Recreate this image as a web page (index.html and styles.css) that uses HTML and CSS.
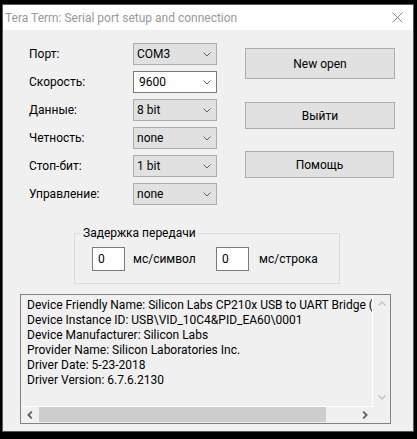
FILE: index.html
```html
<!DOCTYPE html>
<html lang="ru">
<head>
<meta charset="utf-8">
<title>Tera Term: Serial port setup and connection</title>
<link rel="stylesheet" href="styles.css">
</head>
<body>
<div class="window">
  <div class="titlebar">
    <span class="title">Tera Term: Serial port setup and connection</span>
    <svg class="close" width="11" height="11" viewBox="0 0 11 11"><path d="M0.5 0.5 L10.5 10.5 M10.5 0.5 L0.5 10.5" stroke="#8a8a8a" stroke-width="1" fill="none"/></svg>
  </div>
  <div class="content">
    <div class="top">
      <div class="form">
        <span class="label">Порт:</span>
        <div class="combo"><span class="combo-text">COM3</span><svg class="chev" width="8" height="5" viewBox="0 0 8 5"><polyline points="0.5,0.5 4,4 7.5,0.5" fill="none" stroke="#606060" stroke-width="1"/></svg></div>
        <span class="label">Скорость:</span>
        <div class="combo combo-edit"><span class="combo-text">9600</span><svg class="chev" width="8" height="5" viewBox="0 0 8 5"><polyline points="0.5,0.5 4,4 7.5,0.5" fill="none" stroke="#606060" stroke-width="1"/></svg></div>
        <span class="label">Данные:</span>
        <div class="combo"><span class="combo-text">8 bit</span><svg class="chev" width="8" height="5" viewBox="0 0 8 5"><polyline points="0.5,0.5 4,4 7.5,0.5" fill="none" stroke="#606060" stroke-width="1"/></svg></div>
        <span class="label">Четность:</span>
        <div class="combo"><span class="combo-text">none</span><svg class="chev" width="8" height="5" viewBox="0 0 8 5"><polyline points="0.5,0.5 4,4 7.5,0.5" fill="none" stroke="#606060" stroke-width="1"/></svg></div>
        <span class="label">Стоп-бит:</span>
        <div class="combo"><span class="combo-text">1 bit</span><svg class="chev" width="8" height="5" viewBox="0 0 8 5"><polyline points="0.5,0.5 4,4 7.5,0.5" fill="none" stroke="#606060" stroke-width="1"/></svg></div>
        <span class="label">Управление:</span>
        <div class="combo"><span class="combo-text">none</span><svg class="chev" width="8" height="5" viewBox="0 0 8 5"><polyline points="0.5,0.5 4,4 7.5,0.5" fill="none" stroke="#606060" stroke-width="1"/></svg></div>
      </div>
      <div class="buttons">
        <div class="btn btn-default">New open</div>
        <div class="btn btn-exit">Выйти</div>
        <div class="btn btn-help">Помощь</div>
      </div>
    </div>
    <fieldset class="group">
      <legend>Задержка передачи</legend>
      <div class="delay-row">
        <div class="num">0</div>
        <span class="unit unit-char">мс/символ</span>
        <div class="num">0</div>
        <span class="unit unit-line">мс/строка</span>
      </div>
    </fieldset>
    <div class="listbox">
      <div class="list-main">
        <div class="list-text">
          <div class="line">Device Friendly Name: Silicon Labs CP210x USB to UART Bridge (COM3)</div>
          <div class="line">Device Instance ID: USB\VID_10C4&amp;PID_EA60\0001</div>
          <div class="line">Device Manufacturer: Silicon Labs</div>
          <div class="line">Provider Name: Silicon Laboratories Inc.</div>
          <div class="line">Driver Date: 5-23-2018</div>
          <div class="line">Driver Version: 6.7.6.2130</div>
        </div>
        <div class="vscroll">
          <div class="sbtn"><svg width="8" height="5" viewBox="0 0 8 5"><polyline points="0.5,4.5 4,1 7.5,4.5" fill="none" stroke="#c2c2c2" stroke-width="1.3"/></svg></div>
          <div class="sbtn"><svg width="8" height="5" viewBox="0 0 8 5"><polyline points="0.5,0.5 4,4 7.5,0.5" fill="none" stroke="#c2c2c2" stroke-width="1.3"/></svg></div>
        </div>
      </div>
      <div class="hscroll-row">
        <div class="hscroll">
          <div class="hbtn"><svg width="6" height="8" viewBox="0 0 6 8"><polyline points="4.8,0.6 1.4,4 4.8,7.4" fill="none" stroke="#606060" stroke-width="1.8"/></svg></div>
          <div class="thumb-track"><div class="thumb"></div></div>
          <div class="hbtn"><svg width="6" height="8" viewBox="0 0 6 8"><polyline points="1.2,0.6 4.6,4 1.2,7.4" fill="none" stroke="#606060" stroke-width="1.8"/></svg></div>
        </div>
        <div class="corner"></div>
      </div>
    </div>
  </div>
</div>
</body>
</html>
```
FILE: styles.css
```css
* { box-sizing: border-box; }

html, body {
  margin: 0;
  padding: 0;
  width: 417px;
  height: 439px;
  overflow: hidden;
  background: #000;
}

body {
  font-family: Roboto, "Noto Sans", sans-serif;
  font-size: 12px;
  color: #000;
}

.window {
  margin: 4px 0 0 2px;
  width: 412px;
  height: 428px;
  border: 1px solid #5a5a5a;
  background: #f0f0f0;
  display: flex;
  flex-direction: column;
}

.titlebar {
  height: 25px;
  flex: none;
  background: #fff;
  display: flex;
  align-items: center;
  justify-content: space-between;
  padding: 0 10px 0 2px;
}

.title {
  color: #999;
  line-height: 16px;
}

.close { display: block; }

.content {
  display: flex;
  flex-direction: column;
}

.top {
  display: flex;
  padding: 13px 0 0 26px;
}

.form {
  display: grid;
  grid-template-columns: 104px 84px;
  grid-auto-rows: 22px;
  row-gap: 6px;
  align-items: center;
}

.label { line-height: 16px; }

.combo {
  height: 22px;
  border: 1px solid #adadad;
  background: #e1e1e1;
  display: flex;
  align-items: center;
  justify-content: space-between;
  padding: 0 5px 0 3px;
}

.combo-edit {
  background: #fff;
  border-color: #7a7a7a;
  padding-left: 5px;
}

.combo-text { line-height: 16px; }

.chev { display: block; }

.buttons {
  margin-left: 28px;
  padding-top: 5px;
  width: 150px;
  display: flex;
  flex-direction: column;
}

.btn {
  border: 1px solid #adadad;
  background: #e1e1e1;
  display: flex;
  align-items: center;
  justify-content: center;
  line-height: 16px;
}

.btn-default { height: 31px; }
.btn-exit { height: 27px; margin-top: 23px; }
.btn-help { height: 27px; margin-top: 22px; width: 149px; }

.group {
  margin: 20px 0 0 71px;
  width: 266px;
  border: 1px solid #dcdcdc;
  padding: 6px 0 12px 6px;
  min-width: 0;
}

.group legend {
  padding: 0 2px;
  line-height: 16px;
}

.delay-row {
  display: flex;
  align-items: center;
  margin-left: 11px;
}

.num {
  width: 33px;
  height: 24px;
  border: 1px solid #7a7a7a;
  background: #fff;
  padding-left: 5px;
  line-height: 22px;
}

.unit { line-height: 16px; }
.unit-char { width: 91px; padding-left: 8px; }
.unit-line { padding-left: 10px; }

.listbox {
  margin: 10px 0 0 17px;
  width: 371px;
  height: 130px;
  border: 1px solid #828282;
  display: flex;
  flex-direction: column;
}

.list-main {
  display: flex;
  height: 111px;
}

.list-text {
  width: 351px;
  padding: 3px 0 0 6px;
  overflow: hidden;
  white-space: nowrap;
}

.line { line-height: 15px; }

.vscroll {
  width: 18px;
  border-left: 1px solid #fff;
  display: flex;
  flex-direction: column;
  justify-content: space-between;
}

.sbtn {
  height: 17px;
  display: flex;
  align-items: center;
  justify-content: center;
}

.sbtn svg, .hbtn svg { display: block; }

.hscroll-row {
  display: flex;
  height: 17px;
}

.hscroll {
  width: 352px;
  border-top: 1px solid #fff;
  display: flex;
}

.hbtn {
  width: 17px;
  display: flex;
  align-items: center;
  justify-content: center;
}

.thumb-track {
  flex: 1;
  padding: 0 0 1px 1px;
}

.thumb {
  width: 287px;
  height: 15px;
  background: #cdcdcd;
}

.corner {
  width: 17px;
  background: #f0f0f0;
}
```
